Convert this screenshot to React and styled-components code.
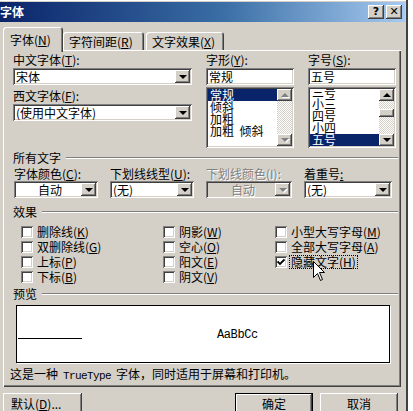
import styled, { createGlobalStyle, css } from "styled-components";

const GlobalStyle = createGlobalStyle`
  html, body {
    margin: 0;
    overflow: hidden;
    background: #ffffff;
  }
  body {
    font-family: "Noto Sans CJK SC", "DejaVu Sans", sans-serif;
    font-size: 12px;
    color: #000;
  }
`;

const sunken = css`
  box-shadow: inset 1px 1px #808080, inset -1px -1px #ffffff,
    inset 2px 2px #404040, inset -2px -2px #d4d0c8;
`;

const raised = css`
  box-shadow: inset -1px -1px #404040, inset 1px 1px #ffffff,
    inset -2px -2px #808080, inset 2px 2px #d4d0c8;
`;

const Dialog = styled.div`
  position: relative;
  width: 408px;
  height: 420px;
  background: #d4d0c8;
  border-right: 2px solid #404040;
  padding-top: 2px;
  box-sizing: border-box;
  box-shadow: inset 0 1px #ffffff;
`;

const TitleBar = styled.div`
  height: 20px;
  margin-right: 1px;
  display: flex;
  align-items: center;
  justify-content: space-between;
  background: linear-gradient(90deg, #0a246a 0%, #3a6ea5 55%, #a6caf0 100%);
`;

const Title = styled.span`
  color: #fff;
  font-weight: bold;
  font-size: 12px;
  line-height: 14px;
`;

const TitleButtons = styled.div`
  display: flex;
  gap: 2px;
  margin-right: 3px;
`;

const TitleButton = styled.div`
  width: 16px;
  height: 14px;
  background: #d4d0c8;
  ${raised};
  display: flex;
  align-items: center;
  justify-content: center;
  font-family: "DejaVu Sans", sans-serif;
  font-weight: bold;
  font-size: 11px;
  line-height: 14px;
`;

const Tabs = styled.div`
  display: flex;
  align-items: flex-end;
  height: 23px;
  margin-top: 5px;
  padding-left: 3px;
`;

const Tab = styled.div`
  position: relative;
  z-index: 1;
  box-sizing: border-box;
  background: #d4d0c8;
  border-radius: 3px 3px 0 0;
  box-shadow: inset 1px 1px #ffffff, inset -1px 0 #404040, inset -2px 0 #808080;
  line-height: 12px;
  white-space: nowrap;
  ${(p) =>
    p.$active
      ? css`
          width: 60px;
          height: 25px;
          margin-bottom: -2px;
          padding: 7px 0 0 7px;
        `
      : css`
          width: ${p.$w}px;
          height: 18px;
          margin-left: ${p.$gap || 0}px;
          padding: 4px 0 0 6px;
        `}
`;

const Mn = styled.u`
  text-decoration: underline;
  text-underline-offset: 1px;
`;

const Panel = styled.div`
  margin-left: 3px;
  width: 398px;
  height: 337px;
  box-sizing: border-box;
  padding: 4px 1px 0 10px;
  ${css`
    box-shadow: inset 1px 1px #ffffff, inset -1px -1px #404040,
      inset -2px -2px #808080;
  `};
`;

const TopSection = styled.div`
  display: flex;
  gap: 14px;
  height: 94px;
`;

const Column = styled.div`
  display: flex;
  flex-direction: column;
  width: ${(p) => p.$w}px;
  margin-right: ${(p) => p.$mr || 0}px;
`;

const Label = styled.div`
  height: 12px;
  line-height: 12px;
  white-space: nowrap;
  margin-top: ${(p) => p.$mt || 0}px;
  margin-bottom: ${(p) => p.$mb || 0}px;
  color: ${(p) => (p.$disabled ? "#808080" : "#000")};
  text-shadow: ${(p) => (p.$disabled ? "1px 1px #ffffff" : "none")};
`;

const Field = styled.div`
  position: relative;
  box-sizing: border-box;
  height: 17px;
  background: ${(p) => (p.$disabled ? "#d4d0c8" : "#ffffff")};
  ${sunken};
  display: flex;
  align-items: center;
  padding: 0 3px;
  line-height: 12px;
  white-space: nowrap;
`;

const FieldText = styled.span`
  flex: 1;
  text-align: ${(p) => (p.$center ? "center" : "left")};
  padding-right: ${(p) => (p.$center ? 12 : 0)}px;
  color: ${(p) => (p.$disabled ? "#808080" : "#000")};
  text-shadow: ${(p) => (p.$disabled ? "1px 1px #ffffff" : "none")};
`;

const DropButton = styled.div`
  position: absolute;
  top: 2px;
  right: 2px;
  width: 15px;
  height: 13px;
  background: #d4d0c8;
  ${raised};
  display: flex;
  align-items: center;
  justify-content: center;
`;

const Arrow = styled.div`
  width: 0;
  height: 0;
  border-left: 4px solid transparent;
  border-right: 4px solid transparent;
  ${(p) =>
    p.$up
      ? css`
          border-bottom: 4px solid ${p.$disabled ? "#808080" : "#000"};
        `
      : css`
          border-top: 4px solid ${p.$disabled ? "#808080" : "#000"};
        `}
  filter: ${(p) => (p.$disabled ? "drop-shadow(1px 1px 0 #fff)" : "none")};
`;

const ListBox = styled.div`
  margin-top: 2px;
  height: 61px;
  box-sizing: border-box;
  background: #fff;
  ${sunken};
  padding: 2px;
  display: flex;
`;

const ListItems = styled.div`
  flex: 1;
  overflow: hidden;
  display: flex;
  flex-direction: column;
  justify-content: ${(p) => (p.$end ? "flex-end" : "flex-start")};
`;

const ListItem = styled.div`
  flex: none;
  height: 12px;
  line-height: 12px;
  padding-left: 2px;
  white-space: pre;
  background: ${(p) => (p.$selected ? "#0a246a" : "transparent")};
  color: ${(p) => (p.$selected ? "#fff" : "#000")};
`;

const ScrollBar = styled.div`
  width: 15px;
  display: flex;
  flex-direction: column;
  background: repeating-conic-gradient(#ffffff 0 25%, #d4d0c8 0 50%) 0 0 / 2px 2px;
`;

const ScrollButton = styled.div`
  height: 12px;
  background: #d4d0c8;
  ${raised};
  display: flex;
  align-items: center;
  justify-content: center;
`;

const Track = styled.div`
  flex: 1;
  position: relative;
`;

const Thumb = styled.div`
  position: absolute;
  left: 0;
  right: 0;
  top: ${(p) => p.$top}px;
  height: 8px;
  background: #d4d0c8;
  ${raised};
`;

const GroupHeader = styled.div`
  display: flex;
  align-items: center;
  gap: 5px;
  height: 12px;
  line-height: 12px;
  margin-top: ${(p) => p.$mt}px;
  margin-right: 2px;
  &::after {
    content: "";
    flex: 1;
    border-top: 1px solid #808080;
    border-bottom: 1px solid #ffffff;
  }
`;

const ComboGrid = styled.div`
  display: grid;
  grid-template-columns: 84px 84px 86px 88px;
  column-gap: 12px;
  margin-top: 4px;
  margin-left: 1px;
`;

const EffectsGrid = styled.div`
  display: grid;
  grid-template-columns: 142px 112px 1fr;
  grid-template-rows: repeat(4, 15px);
  grid-auto-flow: column;
  margin-top: 6px;
  padding-left: 8px;
`;

const CheckRow = styled.div`
  display: flex;
  align-items: center;
  gap: 3px;
  white-space: nowrap;
`;

const CheckBox = styled.div`
  width: 12px;
  height: 12px;
  box-sizing: border-box;
  background: #fff;
  ${sunken};
  display: flex;
  align-items: center;
  justify-content: center;
`;

const CheckLabel = styled.span`
  line-height: 12px;
  padding: 0 1px;
  outline: ${(p) => (p.$focused ? "1px dotted #000" : "none")};
  outline-offset: 0;
`;

const PreviewBox = styled.div`
  position: relative;
  margin: 5px 0 0 3px;
  width: 374px;
  height: 58px;
  box-sizing: border-box;
  background: #fff;
  border: 1px solid #000;
  box-shadow: 1px 1px 0 #ffffff;
  display: flex;
  align-items: center;
`;

const PreviewRule = styled.div`
  width: 64px;
  height: 1px;
  margin: 8px 0 0 1px;
  background: #000;
`;

const Sample = styled.span`
  margin-left: 135px;
  margin-top: 1px;
  font-family: "Liberation Mono", monospace;
  font-size: 12px;
  letter-spacing: -0.4px;
`;

const Note = styled.div`
  margin: 5px 0 0 -3px;
  height: 12px;
  line-height: 12px;
  white-space: nowrap;
`;

const Mono = styled.span`
  font-family: "Liberation Mono", monospace;
  font-size: 11px;
  letter-spacing: -0.6px;
  margin: 0 5px;
`;

const ButtonRow = styled.div`
  display: flex;
  margin-top: 6px;
  padding-left: 3px;
`;

const Button = styled.div`
  width: ${(p) => p.$w}px;
  height: 23px;
  box-sizing: border-box;
  margin-left: ${(p) => p.$ml || 0}px;
  background: #d4d0c8;
  ${raised};
  ${(p) =>
    p.$default &&
    css`
      outline: 1px solid #000;
      outline-offset: -1px;
      box-shadow: inset -2px -2px #404040, inset 2px 2px #ffffff,
        inset -3px -3px #808080;
    `}
  display: flex;
  justify-content: ${(p) => (p.$left ? "flex-start" : "center")};
  padding: 4px ${(p) => (p.$left ? "0 0 8px" : "0 0 0")};
  line-height: 13px;
  white-space: nowrap;
`;

const Cursor = styled.svg`
  position: absolute;
  left: 313px;
  top: 261px;
  z-index: 5;
`;

function Combo({ text, center, disabled }) {
  return (
    <Field $disabled={disabled}>
      <FieldText $center={center} $disabled={disabled}>
        {text}
      </FieldText>
      <DropButton>
        <Arrow $disabled={disabled} />
      </DropButton>
    </Field>
  );
}

function Scroller({ upDisabled, downDisabled, thumb }) {
  return (
    <ScrollBar>
      <ScrollButton>
        <Arrow $up $disabled={upDisabled} />
      </ScrollButton>
      <Track>{thumb !== undefined && <Thumb $top={thumb} />}</Track>
      <ScrollButton>
        <Arrow $disabled={downDisabled} />
      </ScrollButton>
    </ScrollBar>
  );
}

const styles = ["常规", "倾斜", "加粗", "加粗  倾斜"];
const sizes = ["三号", "小三", "四号", "小四", "五号"];

const effects = [
  ["删除线", "K"],
  ["双删除线", "G"],
  ["上标", "P"],
  ["下标", "B"],
  ["阴影", "W"],
  ["空心", "O"],
  ["阳文", "E"],
  ["阴文", "V"],
  ["小型大写字母", "M"],
  ["全部大写字母", "A"],
  ["隐藏文字", "H"],
];

export default function App() {
  return (
    <>
      <GlobalStyle />
      <Dialog>
        <TitleBar>
          <Title>字体</Title>
          <TitleButtons>
            <TitleButton>?</TitleButton>
            <TitleButton>✕</TitleButton>
          </TitleButtons>
        </TitleBar>

        <Tabs>
          <Tab $active>
            字体(<Mn>N</Mn>)
          </Tab>
          <Tab $w={81}>
            字符间距(<Mn>R</Mn>)
          </Tab>
          <Tab $w={78} $gap={2}>
            文字效果(<Mn>X</Mn>)
          </Tab>
        </Tabs>

        <Panel>
          <TopSection>
            <Column $w={179}>
              <Label $mb={2}>
                中文字体(<Mn>T</Mn>):
              </Label>
              <Combo text="宋体" />
              <Label $mt={5} $mb={2}>
                西文字体(<Mn>F</Mn>):
              </Label>
              <Combo text="(使用中文字体)" />
            </Column>
            <Column $w={88}>
              <Label $mb={2}>
                字形(<Mn>Y</Mn>):
              </Label>
              <Field>常规</Field>
              <ListBox>
                <ListItems>
                  {styles.map((s, i) => (
                    <ListItem key={s} $selected={i === 0}>
                      {s}
                    </ListItem>
                  ))}
                </ListItems>
                <Scroller upDisabled downDisabled />
              </ListBox>
            </Column>
            <Column $w={88}>
              <Label $mb={2}>
                字号(<Mn>S</Mn>):
              </Label>
              <Field>五号</Field>
              <ListBox>
                <ListItems $end>
                  {sizes.map((s, i) => (
                    <ListItem key={s} $selected={i === 4}>
                      {s}
                    </ListItem>
                  ))}
                </ListItems>
                <Scroller thumb={8} />
              </ListBox>
            </Column>
          </TopSection>

          <GroupHeader $mt={4}>所有文字</GroupHeader>
          <ComboGrid>
            <Label>
              字体颜色(<Mn>C</Mn>):
            </Label>
            <Label>
              下划线线型(<Mn>U</Mn>):
            </Label>
            <Label $disabled>下划线颜色(I):</Label>
            <Label>
              着重号<Mn>:</Mn>
            </Label>
          </ComboGrid>
          <ComboGrid style={{ marginTop: 1 }}>
            <Combo text="自动" center />
            <Combo text="(无)" />
            <Combo text="自动" center disabled />
            <Combo text="(无)" />
          </ComboGrid>

          <GroupHeader $mt={8}>效果</GroupHeader>
          <EffectsGrid>
            {effects.map(([name, key]) => (
              <CheckRow key={name}>
                <CheckBox>
                  {key === "H" && (
                    <svg width="8" height="8" viewBox="0 0 8 8">
                      <path d="M0.5 3.5 L3 6 L7.5 1.5" stroke="#000" strokeWidth="1.8" fill="none" />
                    </svg>
                  )}
                </CheckBox>
                <CheckLabel $focused={key === "H"}>
                  {name}(<Mn>{key}</Mn>)
                </CheckLabel>
              </CheckRow>
            ))}
          </EffectsGrid>

          <GroupHeader $mt={4}>预览</GroupHeader>
          <PreviewBox>
            <PreviewRule />
            <Sample>AaBbCc</Sample>
          </PreviewBox>
          <Note>
            这是一种<Mono>TrueType</Mono>字体，同时适用于屏幕和打印机。
          </Note>
        </Panel>

        <ButtonRow>
          <Button $w={79} $left>
            默认(<Mn>D</Mn>)...
          </Button>
          <Button $w={78} $ml={153} $default>
            确定
          </Button>
          <Button $w={78} $ml={7}>
            取消
          </Button>
        </ButtonRow>

        <Cursor width="13" height="21" viewBox="0 0 13 21">
          <path
            d="M0.5 0.5 L0.5 16.5 L4.5 12.5 L7.5 19.5 L9.5 18.5 L6.5 11.5 L11.5 11.5 Z"
            fill="#fff"
            stroke="#000"
            strokeWidth="1"
          />
        </Cursor>
      </Dialog>
    </>
  );
}
